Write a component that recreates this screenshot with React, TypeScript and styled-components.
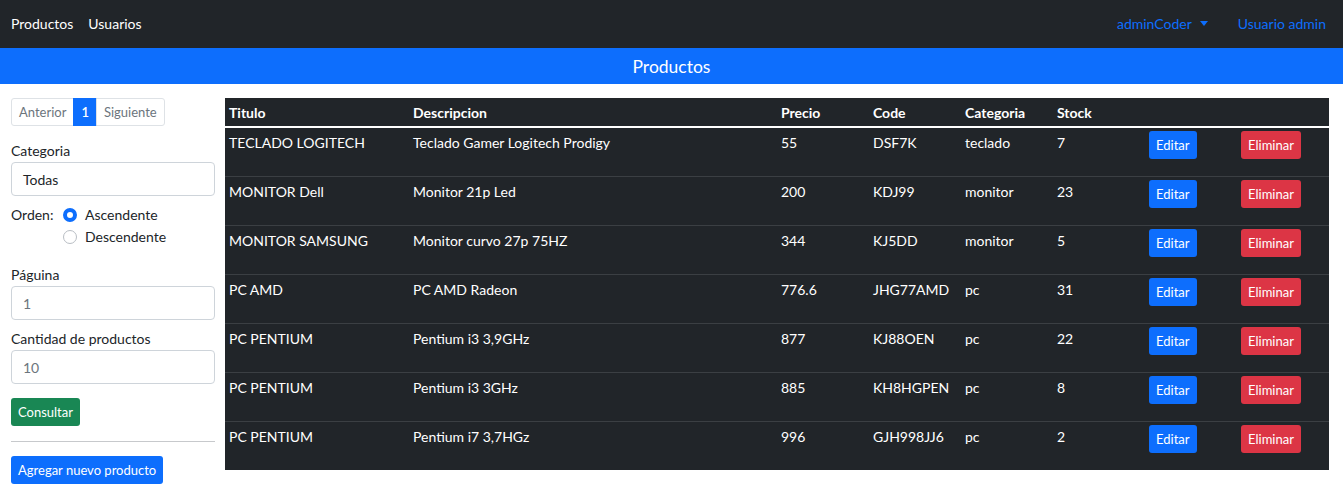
import React from "react";
import styled, { createGlobalStyle } from "styled-components";

const Global = createGlobalStyle`
  * { box-sizing: border-box; }
  body { margin: 0; font-family: "Segoe UI", Lato, "Noto Sans", sans-serif; font-size: 14px; color: #212529; background: #fff; }
`;

const Navbar = styled.nav`
  height: 48px;
  background: #212529;
  display: flex;
  align-items: center;
  justify-content: space-between;
  padding: 0 17px 2px 11px;
`;
const NavGroup = styled.div<{ $gap: number }>`
  display: flex;
  align-items: center;
  gap: ${(p) => p.$gap}px;
`;
const NavLink = styled.a<{ $blue?: boolean }>`
  color: ${(p) => (p.$blue ? "#0d6efd" : "#fff")};
  font-size: 14px;
  text-decoration: none;
  display: flex;
  align-items: center;
  gap: 8px;
`;
const Caret = styled.span`
  width: 0;
  height: 0;
  border-left: 4px solid transparent;
  border-right: 4px solid transparent;
  border-top: 5px solid #0d6efd;
`;
const TitleBar = styled.div`
  height: 36px;
  background: #0d6efd;
  color: #fff;
  font-size: 17.5px;
  display: flex;
  align-items: center;
  justify-content: center;
`;
const Main = styled.div`
  display: flex;
  align-items: flex-start;
  gap: 10px;
  padding: 14px 14px 0 11px;
`;
const Sidebar = styled.aside`
  width: 204px;
  flex: none;
  display: flex;
  flex-direction: column;
`;
const Pagination = styled.div`
  display: flex;
  align-self: flex-start;
`;
const PageItem = styled.span<{ $active?: boolean; $first?: boolean; $last?: boolean }>`
  height: 28px;
  padding: 0 7px;
  display: flex;
  align-items: center;
  font-size: 13px;
  border: 1px solid ${(p) => (p.$active ? "#0d6efd" : "#dee2e6")};
  background: ${(p) => (p.$active ? "#0d6efd" : "#fff")};
  color: ${(p) => (p.$active ? "#fff" : "#6c757d")};
  margin-left: ${(p) => (p.$first ? "0" : "-1px")};
  border-radius: ${(p) => (p.$first ? "3px 0 0 3px" : p.$last ? "0 3px 3px 0" : "0")};
  font-weight: ${(p) => (p.$active ? 600 : 400)};
`;
const Label = styled.label<{ $top: number }>`
  display: block;
  margin-top: ${(p) => p.$top}px;
  margin-bottom: 1px;
  font-size: 14px;
  line-height: 20px;
`;
const Field = styled.div<{ $muted?: boolean }>`
  height: 34px;
  border: 1px solid #ced4da;
  border-radius: 4px;
  padding: 0 11px;
  display: flex;
  align-items: center;
  font-size: 14px;
  color: ${(p) => (p.$muted ? "#6c757d" : "#212529")};
`;
const OrderRow = styled.div`
  display: grid;
  grid-template-columns: 52px auto;
  row-gap: 2px;
  margin-top: 9px;
  align-items: center;
`;
const OrderLabel = styled.span`
  grid-row: 1;
  font-size: 14px;
  line-height: 20px;
`;
const Radio = styled.label<{ $row: number }>`
  grid-column: 2;
  grid-row: ${(p) => p.$row};
  display: flex;
  align-items: center;
  gap: 8px;
  font-size: 14px;
  line-height: 20px;
`;
const RadioDot = styled.span<{ $checked?: boolean }>`
  width: 14px;
  height: 14px;
  border-radius: 50%;
  flex: none;
  background: #fff;
  border: ${(p) => (p.$checked ? "4px solid #0d6efd" : "1px solid #b9bec4")};
`;
const Btn = styled.button<{ $variant: "primary" | "success" | "danger"; $top?: number }>`
  align-self: flex-start;
  height: 28px;
  padding: 0 7px;
  margin-top: ${(p) => p.$top ?? 0}px;
  border: none;
  border-radius: 3px;
  font-family: inherit;
  font-size: 13px;
  color: #fff;
  background: ${(p) =>
    p.$variant === "primary" ? "#0d6efd" : p.$variant === "success" ? "#198754" : "#dc3545"};
`;
const Rule = styled.hr`
  width: 100%;
  border: none;
  border-top: 1px solid #c7c9cc;
  margin: 15px 0 14px;
`;
const Table = styled.table`
  flex: 1;
  background: #212529;
  color: #fff;
  border-collapse: collapse;
  table-layout: fixed;
  font-size: 14px;
`;
const Th = styled.th<{ $w: number }>`
  width: ${(p) => p.$w}px;
  text-align: left;
  font-weight: 700;
  height: 29px;
  padding: 0 4px;
  border-bottom: 2px solid #fff;
`;
const Tr = styled.tr`
  height: 49px;
  & + & td { border-top: 1px solid #3b3f43; }
`;
const Td = styled.td`
  vertical-align: top;
  padding: 6px 4px 0;
  line-height: 17px;
`;
const CellBtn = styled(Btn)`
  margin-top: -3px;
`;

const rows = [
  ["TECLADO LOGITECH", "Teclado Gamer Logitech Prodigy", "55", "DSF7K", "teclado", "7"],
  ["MONITOR Dell", "Monitor 21p Led", "200", "KDJ99", "monitor", "23"],
  ["MONITOR SAMSUNG", "Monitor curvo 27p 75HZ", "344", "KJ5DD", "monitor", "5"],
  ["PC AMD", "PC AMD Radeon", "776.6", "JHG77AMD", "pc", "31"],
  ["PC PENTIUM", "Pentium i3 3,9GHz", "877", "KJ88OEN", "pc", "22"],
  ["PC PENTIUM", "Pentium i3 3GHz", "885", "KH8HGPEN", "pc", "8"],
  ["PC PENTIUM", "Pentium i7 3,7HGz", "996", "GJH998JJ6", "pc", "2"],
];

const cols: [string, number][] = [
  ["Titulo", 184],
  ["Descripcion", 368],
  ["Precio", 92],
  ["Code", 92],
  ["Categoria", 92],
  ["Stock", 92],
  ["", 92],
  ["", 92],
];

export default function App() {
  return (
    <>
      <Global />
      <Navbar>
        <NavGroup $gap={15}>
          <NavLink>Productos</NavLink>
          <NavLink>Usuarios</NavLink>
        </NavGroup>
        <NavGroup $gap={30}>
          <NavLink $blue>
            adminCoder <Caret />
          </NavLink>
          <NavLink $blue>Usuario admin</NavLink>
        </NavGroup>
      </Navbar>
      <TitleBar>Productos</TitleBar>
      <Main>
        <Sidebar>
          <Pagination>
            <PageItem $first>Anterior</PageItem>
            <PageItem $active>1</PageItem>
            <PageItem $last>Siguiente</PageItem>
          </Pagination>
          <Label $top={15}>Categoria</Label>
          <Field>Todas</Field>
          <OrderRow>
            <OrderLabel>Orden:</OrderLabel>
            <Radio $row={1}>
              <RadioDot $checked /> Ascendente
            </Radio>
            <Radio $row={2}>
              <RadioDot /> Descendente
            </Radio>
          </OrderRow>
          <Label $top={18}>Páguina</Label>
          <Field $muted>1</Field>
          <Label $top={9}>Cantidad de productos</Label>
          <Field $muted>10</Field>
          <Btn $variant="success" $top={14}>Consultar</Btn>
          <Rule />
          <Btn $variant="primary">Agregar nuevo producto</Btn>
        </Sidebar>
        <Table>
          <thead>
            <tr>
              {cols.map(([c, w], i) => (
                <Th key={i} $w={w}>{c}</Th>
              ))}
            </tr>
          </thead>
          <tbody>
            {rows.map((r, i) => (
              <Tr key={i}>
                {r.map((c, j) => (
                  <Td key={j}>{c}</Td>
                ))}
                <Td>
                  <CellBtn $variant="primary">Editar</CellBtn>
                </Td>
                <Td>
                  <CellBtn $variant="danger">Eliminar</CellBtn>
                </Td>
              </Tr>
            ))}
          </tbody>
        </Table>
      </Main>
    </>
  );
}
